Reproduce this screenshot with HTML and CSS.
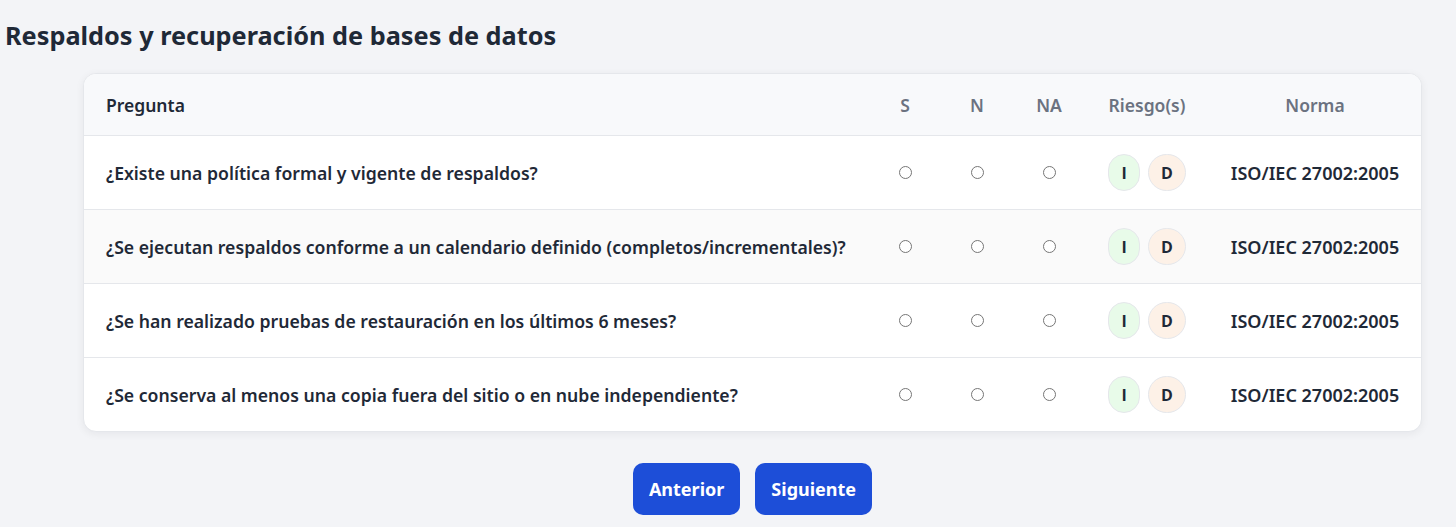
FILE: index.html
```html
<!DOCTYPE html>
<html lang="es">
<head>
<meta charset="utf-8">
<title>Respaldos y recuperación de bases de datos</title>
<link rel="stylesheet" href="styles.css">
</head>
<body>
<main class="page">
  <h2 class="section-title">Respaldos y recuperación de bases de datos</h2>
  <div class="card">
    <table class="quiz">
      <colgroup>
        <col class="c-q"><col class="c-opt"><col class="c-opt"><col class="c-opt"><col class="c-risk"><col class="c-norm">
      </colgroup>
      <thead>
        <tr>
          <th class="th-q">Pregunta</th>
          <th>S</th>
          <th>N</th>
          <th>NA</th>
          <th>Riesgo(s)</th>
          <th>Norma</th>
        </tr>
      </thead>
      <tbody>
        <tr>
          <td class="q">¿Existe una política formal y vigente de respaldos?</td>
          <td class="opt"><input type="radio" name="q1"></td>
          <td class="opt"><input type="radio" name="q1"></td>
          <td class="opt"><input type="radio" name="q1"></td>
          <td class="risk"><span class="badge b-i">I</span><span class="badge b-d">D</span></td>
          <td class="norm">ISO/IEC 27002:2005</td>
        </tr>
        <tr>
          <td class="q">¿Se ejecutan respaldos conforme a un calendario definido (completos/incrementales)?</td>
          <td class="opt"><input type="radio" name="q2"></td>
          <td class="opt"><input type="radio" name="q2"></td>
          <td class="opt"><input type="radio" name="q2"></td>
          <td class="risk"><span class="badge b-i">I</span><span class="badge b-d">D</span></td>
          <td class="norm">ISO/IEC 27002:2005</td>
        </tr>
        <tr>
          <td class="q">¿Se han realizado pruebas de restauración en los últimos 6 meses?</td>
          <td class="opt"><input type="radio" name="q3"></td>
          <td class="opt"><input type="radio" name="q3"></td>
          <td class="opt"><input type="radio" name="q3"></td>
          <td class="risk"><span class="badge b-i">I</span><span class="badge b-d">D</span></td>
          <td class="norm">ISO/IEC 27002:2005</td>
        </tr>
        <tr>
          <td class="q">¿Se conserva al menos una copia fuera del sitio o en nube independiente?</td>
          <td class="opt"><input type="radio" name="q4"></td>
          <td class="opt"><input type="radio" name="q4"></td>
          <td class="opt"><input type="radio" name="q4"></td>
          <td class="risk"><span class="badge b-i">I</span><span class="badge b-d">D</span></td>
          <td class="norm">ISO/IEC 27002:2005</td>
        </tr>
      </tbody>
    </table>
  </div>
  <div class="actions">
    <button class="btn" type="button">Anterior</button>
    <button class="btn" type="button">Siguiente</button>
  </div>
</main>
</body>
</html>
```

FILE: styles.css
```css
* { box-sizing: border-box; }

html, body {
  margin: 0;
  background: #f3f4f7;
}

body {
  font-family: "Noto Sans", "Open Sans", sans-serif;
  color: #1f2937;
}

.page {
  padding: 19px 34px 20px 0;
}

.section-title {
  margin: 0 0 22px 5px;
  font-size: 25.3px;
  line-height: 32px;
  font-weight: 700;
  color: #1f2937;
}

.card {
  margin-left: 83px;
  background: #fff;
  border: 1px solid #e5e7eb;
  border-radius: 13px;
  box-shadow: 0 2px 8px rgba(15, 23, 42, 0.06);
  overflow: hidden;
}

.quiz {
  width: 100%;
  border-collapse: collapse;
  table-layout: fixed;
  font-size: 17.65px;
  line-height: 24px;
}

.c-q { width: 785px; }
.c-opt { width: 72px; }
.c-risk { width: 124px; }
.c-norm { width: auto; }

.quiz thead tr {
  background: #f8f9fb;
}

.quiz th {
  padding: 19px 6px 18px;
  font-size: 17.5px;
  font-weight: 600;
  color: #6b7280;
  text-align: center;
  border-bottom: 1px solid #e5e7eb;
}

.quiz th.th-q {
  text-align: left;
  padding-left: 22px;
  color: #1f2937;
}

.quiz td {
  padding: 18px 6px 18px;
  font-weight: 600;
  vertical-align: middle;
  border-bottom: 1px solid #e5e7eb;
}

.quiz tbody tr:last-child td { border-bottom: none; }

.quiz tbody tr:nth-child(2) { background: #fafafa; }

.quiz td.q {
  padding-left: 22px;
  color: #1f2937;
}

.quiz td.opt { text-align: center; }

.quiz input[type="radio"] {
  appearance: none;
  -webkit-appearance: none;
  width: 13px;
  height: 13px;
  margin: 0;
  border: 1px solid #767676;
  border-radius: 50%;
  background: #fff;
  vertical-align: middle;
  position: relative;
  top: -2px;
}

.quiz td.risk {
  text-align: center;
  white-space: nowrap;
  font-size: 0;
}

.badge {
  display: inline-flex;
  align-items: center;
  justify-content: center;
  height: 37px;
  min-width: 32px;
  border: 1px solid #e5e7eb;
  border-radius: 999px;
  font-family: "Open Sans", "Noto Sans", sans-serif;
  font-size: 16px;
  font-weight: 700;
  color: #1f2937;
  vertical-align: middle;
}

.badge + .badge { margin-left: 8px; }

.b-i { background: #e8fbe9; padding: 0 10px; }
.b-d { background: #fdf1e7; padding: 0 12px; }

.quiz td.norm {
  text-align: center;
  color: #1f2937;
  white-space: nowrap;
  font-size: 18px;
}

.actions {
  display: flex;
  justify-content: center;
  gap: 15px;
  margin-left: 83px;
  margin-top: 31px;
}

.btn {
  height: 52px;
  padding: 0 16px;
  border: none;
  border-radius: 10px;
  background: #1d4ed8;
  color: #fff;
  font-family: inherit;
  font-size: 18px;
  font-weight: 700;
  cursor: pointer;
}
```
